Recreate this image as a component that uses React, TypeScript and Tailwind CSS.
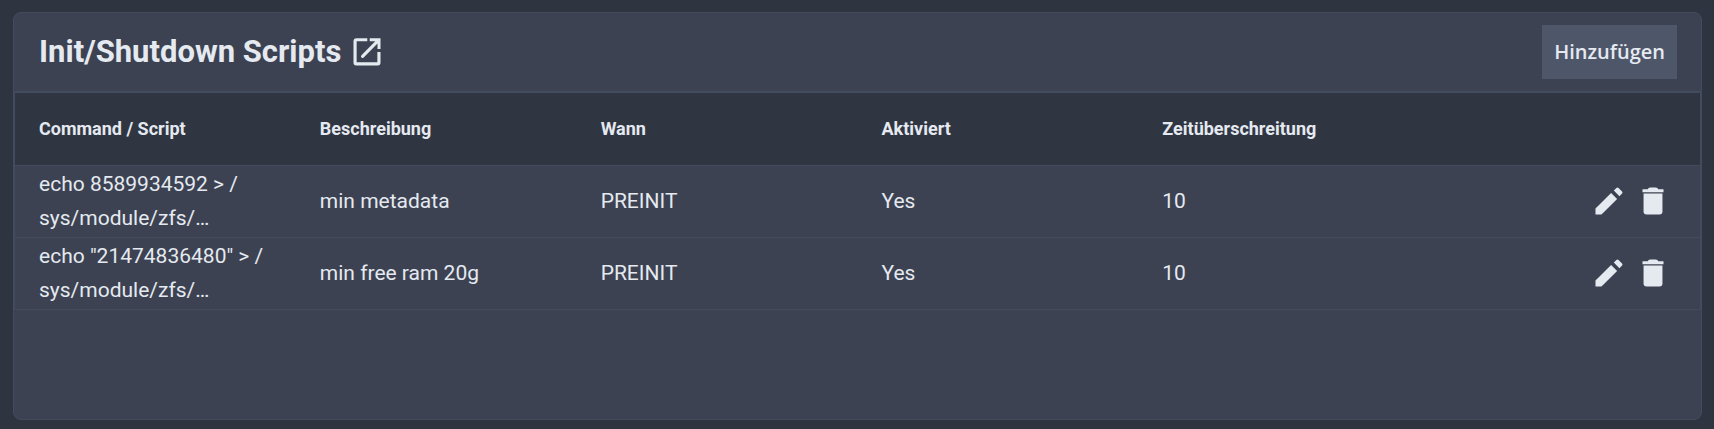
import React from 'react';

interface InitScript {
    id: number;
    command: string[];
    description: string;
    when: string;
    enabled: string;
    timeout: number;
}

const COLUMNS = ['Command / Script', 'Beschreibung', 'Wann', 'Aktiviert', 'Zeitüberschreitung'];

const SCRIPTS: InitScript[] = [
    { id: 1, command: ['echo 8589934592 > /', 'sys/module/zfs/…'], description: 'min metadata', when: 'PREINIT', enabled: 'Yes', timeout: 10 },
    { id: 2, command: ['echo "21474836480" > /', 'sys/module/zfs/…'], description: 'min free ram 20g', when: 'PREINIT', enabled: 'Yes', timeout: 10 },
];

const OpenIcon = () => (
    <svg viewBox="0 0 24 24" className="size-9" fill="currentColor" aria-hidden="true">
        <path d="M5 2.8h7.2v2.1H5.1v14h13.8V12H21v7.2a1.8 1.8 0 0 1-1.8 1.8H4.8A1.8 1.8 0 0 1 3 19.2V4.8a2 2 0 0 1 2-2zM13.8 2.8H21V10h-2V6.4l-9.2 9.2a1.05 1.05 0 0 1-1.5-1.5l9.2-9.2h-3.7z" />
    </svg>
);

const EditIcon = () => (
    <svg viewBox="0 0 24 24" className="size-9" fill="currentColor" aria-hidden="true">
        <path d="M3 17v4h4L17.4 10.6l-4-4L3 17zM20.7 7.04a1 1 0 0 0 0-1.41l-2.34-2.34a1 1 0 0 0-1.41 0l-1.75 1.75 3.75 3.75 1.75-1.75z" />
    </svg>
);

const DeleteIcon = () => (
    <svg viewBox="0 0 24 24" className="size-9" fill="currentColor" aria-hidden="true">
        <path d="M5.7 7h12.6v12a2 2 0 0 1-2 2H7.7a2 2 0 0 1-2-2zM5 4.2h3.5q.4-1.2 1.6-1.2h3.8q1.2 0 1.6 1.2H19v2H5z" />
    </svg>
);

const ScriptRow: React.FC<{ script: InitScript }> = ({ script }) => (
    <tr className="h-[72px] border-b border-[#434c5e]">
        <td className="pl-6">
            {script.command.map(line => (
                <div key={line} className="whitespace-nowrap">{line}</div>
            ))}
        </td>
        <td className="pl-6">{script.description}</td>
        <td className="pl-6">{script.when}</td>
        <td className="pl-6">{script.enabled}</td>
        <td className="pl-6">{script.timeout}</td>
        <td className="pr-[29px]">
            <div className="flex justify-end gap-2">
                <button type="button" aria-label="Bearbeiten"><EditIcon /></button>
                <button type="button" aria-label="Löschen"><DeleteIcon /></button>
            </div>
        </td>
    </tr>
);

const App: React.FC = () => {
    return (
        <div className="min-h-screen flex bg-[#2e3440] text-[#e5e9f0] font-['Roboto',sans-serif] pt-3 pb-[9px] pl-[13px] pr-3">
            <section className="flex-1 rounded-lg border border-[#434c5e] bg-[#3c4252]">
                <header className="flex items-center justify-between pl-[25px] pr-6 py-3">
                    <h3 className="flex items-center gap-2 text-[31px] font-bold">
                        Init/Shutdown Scripts
                        <a href="#initshutdownscripts" aria-label="Init/Shutdown Scripts"><OpenIcon /></a>
                    </h3>
                    <button type="button" className="h-[54px] px-3 bg-[#4e566a] font-['Open_Sans',sans-serif] text-xl font-semibold">
                        Hinzufügen
                    </button>
                </header>
                <div className="border-t-2 border-x border-[#434c5e]">
                    <table className="w-full table-fixed border-collapse text-left text-[21px] leading-[34px]">
                        <thead>
                            <tr className="h-[72px] border-b border-[#434c5e] bg-[#303542] text-lg">
                                {COLUMNS.map(name => (
                                    <th key={name} scope="col" className="pl-6 font-bold">{name}</th>
                                ))}
                                <td />
                            </tr>
                        </thead>
                        <tbody>
                            {SCRIPTS.map(script => <ScriptRow key={script.id} script={script} />)}
                        </tbody>
                    </table>
                </div>
            </section>
        </div>
    );
};

export default App;
